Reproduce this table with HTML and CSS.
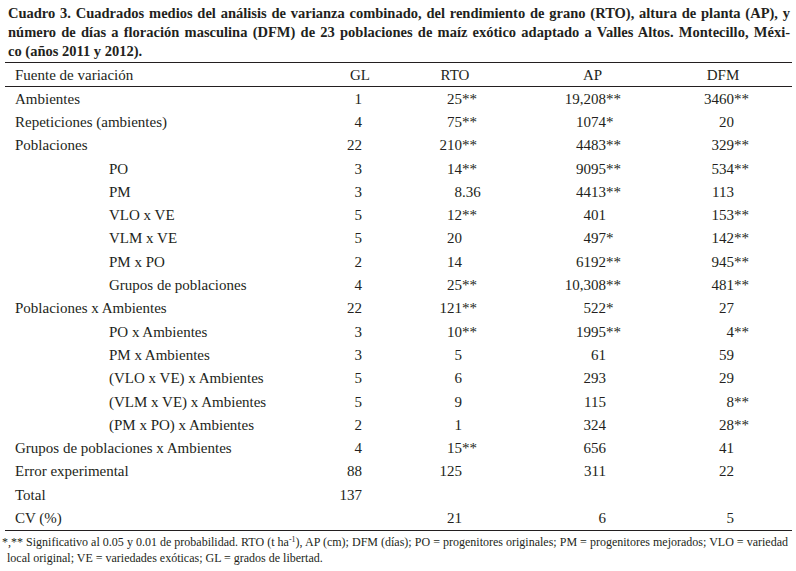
FILE: index.html
```html
<!DOCTYPE html>
<html lang="es">
<head>
<meta charset="utf-8">
<title>Cuadro 3</title>
<link rel="stylesheet" href="styles.css">
</head>
<body>
<div class="page">
  <div class="caption">
    <span class="line full">Cuadro 3. Cuadrados medios del análisis de varianza combinado, del rendimiento de grano (RTO), altura de planta (AP), y</span>
    <span class="line full">número de días a floración masculina (DFM) de 23 poblaciones de maíz exótico adaptado a Valles Altos. Montecillo, Méxi-</span>
    <span class="line">co (años 2011 y 2012).</span>
  </div>

  <div class="table">
    <div class="row head">
      <div class="label">Fuente de variación</div>
      <div class="hc">GL</div>
      <div class="hc">RTO</div>
      <div class="hc">AP</div>
      <div class="hc">DFM</div>
    </div>

    <div class="row">
      <div class="label">Ambientes</div><div class="gl">1</div>
      <div class="v rto"><span class="i">25</span><span class="s">**</span></div>
      <div class="v ap"><span class="i">19,208</span><span class="s">**</span></div>
      <div class="v dfm"><span class="i">3460</span><span class="s">**</span></div>
    </div>
    <div class="row">
      <div class="label">Repeticiones (ambientes)</div><div class="gl">4</div>
      <div class="v rto"><span class="i">75</span><span class="s">**</span></div>
      <div class="v ap"><span class="i">1074</span><span class="s">*</span></div>
      <div class="v dfm"><span class="i">20</span></div>
    </div>
    <div class="row">
      <div class="label">Poblaciones</div><div class="gl">22</div>
      <div class="v rto"><span class="i">210</span><span class="s">**</span></div>
      <div class="v ap"><span class="i">4483</span><span class="s">**</span></div>
      <div class="v dfm"><span class="i">329</span><span class="s">**</span></div>
    </div>
    <div class="row">
      <div class="label sub">PO</div><div class="gl">3</div>
      <div class="v rto"><span class="i">14</span><span class="s">**</span></div>
      <div class="v ap"><span class="i">9095</span><span class="s">**</span></div>
      <div class="v dfm"><span class="i">534</span><span class="s">**</span></div>
    </div>
    <div class="row">
      <div class="label sub">PM</div><div class="gl">3</div>
      <div class="v rto"><span class="i">8</span><span class="s">.36</span></div>
      <div class="v ap"><span class="i">4413</span><span class="s">**</span></div>
      <div class="v dfm"><span class="i">113</span></div>
    </div>
    <div class="row">
      <div class="label sub">VLO x VE</div><div class="gl">5</div>
      <div class="v rto"><span class="i">12</span><span class="s">**</span></div>
      <div class="v ap"><span class="i">401</span></div>
      <div class="v dfm"><span class="i">153</span><span class="s">**</span></div>
    </div>
    <div class="row">
      <div class="label sub">VLM x VE</div><div class="gl">5</div>
      <div class="v rto"><span class="i">20</span></div>
      <div class="v ap"><span class="i">497</span><span class="s">*</span></div>
      <div class="v dfm"><span class="i">142</span><span class="s">**</span></div>
    </div>
    <div class="row">
      <div class="label sub">PM x PO</div><div class="gl">2</div>
      <div class="v rto"><span class="i">14</span></div>
      <div class="v ap"><span class="i">6192</span><span class="s">**</span></div>
      <div class="v dfm"><span class="i">945</span><span class="s">**</span></div>
    </div>
    <div class="row">
      <div class="label sub">Grupos de poblaciones</div><div class="gl">4</div>
      <div class="v rto"><span class="i">25</span><span class="s">**</span></div>
      <div class="v ap"><span class="i">10,308</span><span class="s">**</span></div>
      <div class="v dfm"><span class="i">481</span><span class="s">**</span></div>
    </div>
    <div class="row">
      <div class="label">Poblaciones x Ambientes</div><div class="gl">22</div>
      <div class="v rto"><span class="i">121</span><span class="s">**</span></div>
      <div class="v ap"><span class="i">522</span><span class="s">*</span></div>
      <div class="v dfm"><span class="i">27</span></div>
    </div>
    <div class="row">
      <div class="label sub">PO x Ambientes</div><div class="gl">3</div>
      <div class="v rto"><span class="i">10</span><span class="s">**</span></div>
      <div class="v ap"><span class="i">1995</span><span class="s">**</span></div>
      <div class="v dfm"><span class="i">4</span><span class="s">**</span></div>
    </div>
    <div class="row">
      <div class="label sub">PM x Ambientes</div><div class="gl">3</div>
      <div class="v rto"><span class="i">5</span></div>
      <div class="v ap"><span class="i">61</span></div>
      <div class="v dfm"><span class="i">59</span></div>
    </div>
    <div class="row">
      <div class="label sub">(VLO x VE) x Ambientes</div><div class="gl">5</div>
      <div class="v rto"><span class="i">6</span></div>
      <div class="v ap"><span class="i">293</span></div>
      <div class="v dfm"><span class="i">29</span></div>
    </div>
    <div class="row">
      <div class="label sub">(VLM x VE) x Ambientes</div><div class="gl">5</div>
      <div class="v rto"><span class="i">9</span></div>
      <div class="v ap"><span class="i">115</span></div>
      <div class="v dfm"><span class="i">8</span><span class="s">**</span></div>
    </div>
    <div class="row">
      <div class="label sub">(PM x PO) x Ambientes</div><div class="gl">2</div>
      <div class="v rto"><span class="i">1</span></div>
      <div class="v ap"><span class="i">324</span></div>
      <div class="v dfm"><span class="i">28</span><span class="s">**</span></div>
    </div>
    <div class="row">
      <div class="label">Grupos de poblaciones x Ambientes</div><div class="gl">4</div>
      <div class="v rto"><span class="i">15</span><span class="s">**</span></div>
      <div class="v ap"><span class="i">656</span></div>
      <div class="v dfm"><span class="i">41</span></div>
    </div>
    <div class="row">
      <div class="label">Error experimental</div><div class="gl">88</div>
      <div class="v rto"><span class="i">125</span></div>
      <div class="v ap"><span class="i">311</span></div>
      <div class="v dfm"><span class="i">22</span></div>
    </div>
    <div class="row">
      <div class="label">Total</div><div class="gl">137</div>
      <div class="v rto"></div>
      <div class="v ap"></div>
      <div class="v dfm"></div>
    </div>
    <div class="row last">
      <div class="label">CV (%)</div><div class="gl"></div>
      <div class="v rto"><span class="i">21</span></div>
      <div class="v ap"><span class="i">6</span></div>
      <div class="v dfm"><span class="i">5</span></div>
    </div>
  </div>

  <div class="foot">
    <span class="line full first">*,** Significativo al 0.05 y 0.01 de probabilidad. RTO (t ha<sup>-1</sup>), AP (cm); DFM (días); PO = progenitores originales; PM = progenitores mejorados; VLO = variedad</span>
    <span class="line second">local original; VE = variedades exóticas; GL = grados de libertad.</span>
  </div>
</div>
</body>
</html>
```

FILE: styles.css
```css
* { box-sizing: border-box; }

html, body {
  margin: 0;
  padding: 0;
  background: #ffffff;
}

body {
  font-family: "Liberation Serif", "Times New Roman", serif;
  color: #231f20;
}

.page {
  width: 796px;
  padding: 4px 4px 0 5px;
}

.caption {
  font-weight: bold;
  font-size: 14.5px;
  line-height: 19px;
  margin: 0 2px 1px 3px;
}

.line {
  display: block;
  white-space: nowrap;
}

.line.full {
  white-space: normal;
  text-align: justify;
  text-align-last: justify;
}

.table {
  border-top: 1px solid #231f20;
  border-bottom: 1px solid #231f20;
  font-size: 15px;
}

.row {
  display: grid;
  grid-template-columns: 315px 80px 110px 165px 96px 21px;
  height: 23.3px;
  align-items: center;
  line-height: 18px;
}

.row.head {
  height: 24px;
  border-bottom: 1px solid #231f20;
}

.label {
  padding-left: 10px;
  white-space: nowrap;
}

.label.sub {
  padding-left: 104px;
}

.hc {
  text-align: center;
}

.gl {
  text-align: right;
  padding-right: 38px;
}

.v {
  display: flex;
  white-space: nowrap;
}

.v .i {
  text-align: right;
  flex: none;
}

.rto .i { width: 62px; }
.ap .i { width: 96px; }
.dfm .i { width: 59px; }

.foot {
  font-size: 12px;
  line-height: 16px;
  margin: 3px 4px 0 -3px;
}

.foot .second {
  padding-left: 5px;
}

.foot sup {
  font-size: 8px;
  line-height: 0;
  vertical-align: 4px;
}
```
